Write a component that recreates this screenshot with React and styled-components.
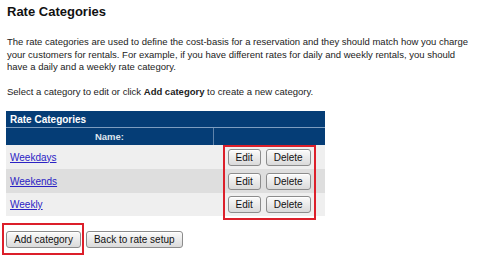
import styled, { createGlobalStyle } from 'styled-components';

const GlobalStyle = createGlobalStyle`
	body {
		margin: 0;
		background: #fff;
		font-family: "Liberation Sans", Arial, sans-serif;
		color: #222;
	}
`

const categories = [
	{ name: "Weekdays" },
	{ name: "Weekends" },
	{ name: "Weekly" }
]

function App() {
	return (
		<Page>
			<GlobalStyle />
			<Title>Rate Categories</Title>
			<Intro>
				The rate categories are used to define the cost-basis for a reservation and they should match how you charge<br />
				your customers for rentals. For example, if you have different rates for daily and weekly rentals, you should<br />
				have a daily and a weekly rate category.
			</Intro>
			<Hint>Select a category to edit or click <b>Add category</b> to create a new category.</Hint>
			<TableWrap>
				<Table>
					<thead>
						<tr>
							<Caption colSpan={2}>Rate Categories</Caption>
						</tr>
						<tr>
							<ColHead>Name:</ColHead>
							<ColHead $divider></ColHead>
						</tr>
					</thead>
					<tbody>
						{categories.map((c, i) => (
							<Row key={c.name} $alt={i % 2 === 1} $last={i === categories.length - 1}>
								<NameCell><Link href="#">{c.name}</Link></NameCell>
								<ActionCell>
									<Button>Edit</Button>
									<Button>Delete</Button>
								</ActionCell>
							</Row>
						))}
					</tbody>
				</Table>
				<Marker />
			</TableWrap>
			<Footer>
				<Highlight>
					<Button>Add category</Button>
				</Highlight>
				<Button>Back to rate setup</Button>
			</Footer>
		</Page>
	);
}

const Page = styled.div`
	padding: 4px 6px 0 7px;
	font-size: 9.5px;
`

const Title = styled.h1`
	margin: 0;
	font-size: 13px;
	line-height: 15px;
	color: #111;
`

const Intro = styled.p`
	margin: 17px 0 0;
	line-height: 12.5px;
	white-space: nowrap;
`

const Hint = styled.p`
	margin: 12px 0 0;
	line-height: 12.5px;
	white-space: nowrap;
`

const TableWrap = styled.div`
	position: relative;
	width: 319px;
	margin: 13px 0 0 -1px;
`

const Table = styled.table`
	width: 100%;
	border-collapse: collapse;
	border-spacing: 0;
	font-size: 10px;
`

const Caption = styled.th`
	background: #053d76;
	color: #fff;
	text-align: left;
	font-weight: bold;
	height: 16px;
	padding: 0 4px;
	border-bottom: 1px solid #7d9dc0;
`

const ColHead = styled.th`
	background: #053d76;
	color: #dfe6ee;
	font-size: 9.5px;
	font-weight: bold;
	height: 17px;
	padding: 0;
	width: ${p => p.$divider ? '111px' : 'auto'};
	border-left: ${p => p.$divider ? '1px solid #5f83ab' : 'none'};
`

const Row = styled.tr`
	background: ${p => p.$alt ? '#dedede' : '#efefef'};
	height: ${p => p.$last ? '23px' : '24px'};
`

const NameCell = styled.td`
	padding: 0 4px;
`

const ActionCell = styled.td`
	padding: 0 0 0 14px;
	white-space: nowrap;
	& > button + button {
		margin-left: 5px;
	}
`

const Link = styled.a`
	color: #2b22c4;
	text-decoration: underline;
`

const Button = styled.button`
	font-family: "Liberation Sans", Arial, sans-serif;
	font-size: 10px;
	color: #111;
	height: 17px;
	padding: 0 7px;
	border: 1px solid #8c8c8c;
	border-radius: 3px;
	background: linear-gradient(#fbfbfb, #dadada);
	box-shadow: inset 0 1px 0 #fff;
	vertical-align: middle;
`

const Marker = styled.div`
	position: absolute;
	left: 217px;
	top: 34px;
	width: 93px;
	height: 75px;
	box-sizing: border-box;
	border: 2px solid #dc1f2a;
	pointer-events: none;
`

const Footer = styled.div`
	display: flex;
	align-items: center;
	gap: 2px;
	margin: 7px 0 0 -5px;
`

const Highlight = styled.div`
	border: 2px solid #dc1f2a;
	padding: 6px 1px 5px 2px;
	display: flex;
`

export default App;
